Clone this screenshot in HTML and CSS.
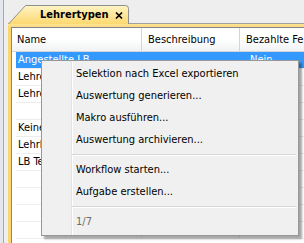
FILE: index.html
```html
<!DOCTYPE html>
<html lang="de">
  <head>
    <meta charset="utf-8">
    <title>Lehrertypen</title>
    <link rel="stylesheet" href="styles.css">
  </head>
  <body>
    <div class="window">
      <div class="rail"></div>
      <div class="pane">
        <div class="tabstrip">
          <div class="tab">
            <svg class="tab-shape" width="121" height="19" viewBox="0 0 121 19">
              <defs>
                <linearGradient id="tabfill" x1="0" y1="0" x2="0" y2="1">
                  <stop offset="0" stop-color="#fff4c4"/>
                  <stop offset="1" stop-color="#fcd870"/>
                </linearGradient>
              </defs>
              <path d="M0 19 L17.5 0.5 H117.5 Q120.5 0.5 120.5 3.5 V19 Z" fill="url(#tabfill)"/>
              <path d="M0.5 19 L17.5 0.5 H117.5 Q120.5 0.5 120.5 3.5 V19" fill="none" stroke="#8f8f8f"/>
            </svg>
            <span class="tab-title">Lehrertypen</span>
            <svg class="tab-close" width="8" height="7" viewBox="0 0 8 7">
              <path d="M1 0.5 L7 6.5 M7 0.5 L1 6.5" stroke="#000" stroke-width="1.6"/>
            </svg>
          </div>
        </div>
        <div class="frame">
          <div class="grid">
            <div class="row head">
              <div class="cell c1">Name</div>
              <div class="cell c2">Beschreibung</div>
              <div class="cell c3">Bezahlte Ferien</div>
            </div>
            <div class="row selected">
              <div class="cell c1">Angestellte LB</div>
              <div class="cell c2"></div>
              <div class="cell c3">Nein</div>
            </div>
            <div class="row">
              <div class="cell c1">Lehrer</div>
              <div class="cell c2"></div>
              <div class="cell c3">Ja</div>
            </div>
            <div class="row">
              <div class="cell c1">Lehrer Teilzeit</div>
              <div class="cell c2"></div>
              <div class="cell c3">Ja</div>
            </div>
            <div class="row">
              <div class="cell c1"></div>
              <div class="cell c2"></div>
              <div class="cell c3"></div>
            </div>
            <div class="row">
              <div class="cell c1">Keine Angabe</div>
              <div class="cell c2"></div>
              <div class="cell c3">Nein</div>
            </div>
            <div class="row">
              <div class="cell c1">Lehrbeauftragte</div>
              <div class="cell c2"></div>
              <div class="cell c3">Nein</div>
            </div>
            <div class="row">
              <div class="cell c1">LB Teilzeit</div>
              <div class="cell c2"></div>
              <div class="cell c3">Nein</div>
            </div>
            <div class="row"><div class="cell c1"></div><div class="cell c2"></div><div class="cell c3"></div></div>
            <div class="row"><div class="cell c1"></div><div class="cell c2"></div><div class="cell c3"></div></div>
            <div class="row"><div class="cell c1"></div><div class="cell c2"></div><div class="cell c3"></div></div>
            <div class="row"><div class="cell c1"></div><div class="cell c2"></div><div class="cell c3"></div></div>
          </div>
        </div>
      </div>

      <div class="menu">
        <div class="item">Selektion nach Excel exportieren</div>
        <div class="item">Auswertung generieren...</div>
        <div class="item">Makro ausführen...</div>
        <div class="item">Auswertung archivieren...</div>
        <div class="sep"></div>
        <div class="item">Workflow starten...</div>
        <div class="item">Aufgabe erstellen...</div>
        <div class="sep"></div>
        <div class="item disabled">1/7</div>
      </div>
    </div>
  </body>
</html>
```

FILE: styles.css
```css
body {
  margin: 0;
  background: #f0f0f0;
  color: #000000;
  font-family: "DejaVu Sans Condensed", "DejaVu Sans", sans-serif;
  font-size: 11px;
}

.window {
  position: relative;
  display: flex;
  width: 304px;
  height: 243px;
  overflow: hidden;
}

.rail {
  flex: 0 0 8px;
  background: linear-gradient(to right, #e4e8ee 0, #e4e8ee 3px, #a9a9a9 3px, #a9a9a9 4px, #eeeeee 4px);
}

.pane {
  flex: 1;
  display: flex;
  flex-direction: column;
  min-width: 0;
}

/* tab strip */

.tabstrip {
  height: 24px;
  box-sizing: border-box;
  padding-top: 5px;
  background: #eeeeee;
  box-shadow: inset 0 -1px 0 #a0a0a0;
  display: flex;
}

.tab {
  position: relative;
  width: 121px;
  height: 19px;
  display: flex;
  align-items: center;
}

.tab-shape {
  position: absolute;
  left: 0;
  top: 0;
}

.tab-title {
  position: relative;
  margin-left: 32px;
  font-weight: bold;
}

.tab-close {
  position: relative;
  margin-left: auto;
  margin-right: 6px;
  margin-top: 2px;
}

/* grid */

.frame {
  flex: 1;
  padding: 3px 0 0 3px;
  background: linear-gradient(#fde596, #fbd56d 4px, #fbd56d);
}

.grid {
  height: 100%;
  border-left: 1px solid #828790;
  border-top: 1px solid #828790;
  background: #ffffff;
  padding-left: 4px;
}

.row {
  display: flex;
  height: 17px;
  box-sizing: border-box;
  border-bottom: 1px solid #ededed;
  line-height: 16px;
  white-space: nowrap;
}

.row.head {
  height: 24px;
  margin-left: -4px;
  padding-left: 4px;
  line-height: 23px;
  border-bottom: 1px solid #d5d5d5;
  background: linear-gradient(#ffffff, #ffffff 50%, #f1f2f4);
}

.cell {
  box-sizing: border-box;
  overflow: hidden;
  border-right: 1px solid #ededed;
}

.head .cell {
  border-right-color: #d5d5d5;
}

.c1 {
  flex: 0 0 126px;
  padding-left: 2px;
}

.head .c1 {
  padding-left: 1px;
}

.c2 {
  flex: 0 0 98px;
  padding-left: 6px;
}

.c3 {
  flex: 1;
  padding-left: 10px;
  border-right: none;
}

.head .c2,
.head .c3 {
  padding-left: 6px;
}

.row.selected {
  background: #3399ff;
  color: #ffffff;
}

.row.selected .cell {
  border-right-color: #3399ff;
}

/* context menu */

.menu {
  position: absolute;
  left: 41px;
  top: 60px;
  width: 258px;
  box-sizing: border-box;
  padding: 2px;
  border: 1px solid #979797;
  background: #f0f0f0 linear-gradient(to right, transparent 29px, #e2e3e3 29px, #e2e3e3 30px, #ffffff 30px, #ffffff 31px, transparent 31px);
  box-shadow: 3px 3px 2px rgba(0, 0, 0, 0.35);
}

.item {
  height: 22px;
  line-height: 22px;
  padding-left: 32px;
  white-space: nowrap;
}

.item.disabled {
  color: #6d6d6d;
}

.sep {
  height: 2px;
  margin: 3px 0 3px 28px;
  border-top: 1px solid #d7d7d7;
  border-bottom: 1px solid #ffffff;
  box-sizing: border-box;
}
```
